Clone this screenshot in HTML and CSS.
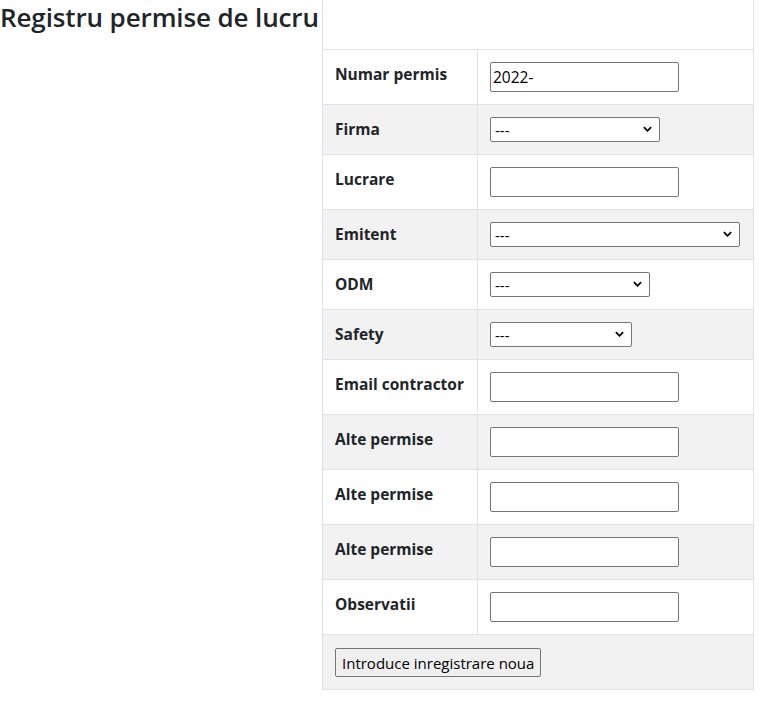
FILE: index.html
```html
<!DOCTYPE html>
<html lang="ro">
<head>
<meta charset="utf-8">
<title>Registru permise de lucru</title>
<link rel="stylesheet" href="styles.css">
</head>
<body>
<div class="page">
  <h2 class="title">Registru permise de lucru</h2>
  <form class="form">
    <table class="grid">
      <colgroup><col class="col-label"><col class="col-value"></colgroup>
      <thead>
        <tr><th>&nbsp;</th><th>&nbsp;</th></tr>
      </thead>
      <tbody>
        <tr><td class="label">Numar permis</td><td><input class="field" type="text" value="2022-"></td></tr>
        <tr><td class="label">Firma</td><td><span class="sel sel-firma"><select><option>---</option></select><svg class="chev" viewBox="0 0 10 6"><path d="M1 1l4 4 4-4" /></svg></span></td></tr>
        <tr><td class="label">Lucrare</td><td><input class="field" type="text"></td></tr>
        <tr><td class="label">Emitent</td><td><span class="sel sel-emitent"><select><option>---</option></select><svg class="chev" viewBox="0 0 10 6"><path d="M1 1l4 4 4-4" /></svg></span></td></tr>
        <tr><td class="label">ODM</td><td><span class="sel sel-odm"><select><option>---</option></select><svg class="chev" viewBox="0 0 10 6"><path d="M1 1l4 4 4-4" /></svg></span></td></tr>
        <tr><td class="label">Safety</td><td><span class="sel sel-safety"><select><option>---</option></select><svg class="chev" viewBox="0 0 10 6"><path d="M1 1l4 4 4-4" /></svg></span></td></tr>
        <tr><td class="label">Email contractor</td><td><input class="field" type="text"></td></tr>
        <tr><td class="label">Alte permise</td><td><input class="field" type="text"></td></tr>
        <tr><td class="label">Alte permise</td><td><input class="field" type="text"></td></tr>
        <tr><td class="label">Alte permise</td><td><input class="field" type="text"></td></tr>
        <tr><td class="label">Observatii</td><td><input class="field" type="text"></td></tr>
        <tr><td colspan="2"><button class="btn" type="button">Introduce inregistrare noua</button></td></tr>
      </tbody>
    </table>
  </form>
</div>
</body>
</html>
```
FILE: styles.css
```css
html, body {
  margin: 0;
  padding: 0;
  background: #ffffff;
}
body {
  font-family: "Open Sans", "Noto Sans", sans-serif;
  color: #212529;
  font-size: 16px;
}
.page {
  display: flex;
  align-items: flex-start;
}
.title {
  flex: none;
  width: 322px;
  margin: 0;
  padding-top: 2px;
  font-size: 26px;
  font-weight: 600;
  line-height: 1.2;
  white-space: nowrap;
  letter-spacing: -0.12px;
}
.form {
  margin: 0;
}
.grid {
  border-collapse: collapse;
  table-layout: fixed;
  width: 431px;
  border-left: 1px solid #dee2e6;
  border-right: 1px solid #dee2e6;
  border-bottom: 1px solid #dee2e6;
}
.col-label { width: 155px; }
.col-value { width: 276px; }
.grid th,
.grid td {
  padding: 12px;
  line-height: 24px;
  vertical-align: top;
  text-align: left;
  border-left: 1px solid #dee2e6;
  border-top: 1px solid #dee2e6;
}
.grid thead th {
  padding-top: 13px;
  border-top: none;
  border-left: none;
}
.grid tbody tr:nth-child(even) {
  background: #f2f2f2;
}
.label {
  font-weight: 700;
  font-size: 15.5px;
  white-space: nowrap;
}
.field {
  display: block;
  box-sizing: border-box;
  width: 189px;
  height: 30px;
  margin: 0;
  padding: 1px 2px;
  border: 1px solid #767676;
  border-radius: 2px;
  background: #ffffff;
  font-family: inherit;
  font-size: 15.5px;
  color: #000000;
}
.sel {
  position: relative;
  display: block;
}
.sel select {
  display: block;
  box-sizing: border-box;
  height: 25px;
  margin: 0;
  padding: 0 20px 0 4px;
  border: 1px solid #767676;
  border-radius: 2px;
  background: #ffffff;
  font-family: inherit;
  font-size: 15px;
  color: #000000;
  -webkit-appearance: none;
  appearance: none;
}
.sel-firma select { width: 170px; }
.sel-emitent select { width: 250px; }
.sel-odm select { width: 160px; }
.sel-safety select { width: 142px; }
.chev {
  position: absolute;
  top: 9px;
  width: 9px;
  height: 6px;
  fill: none;
  stroke: #000000;
  stroke-width: 2;
}
.sel-firma .chev { left: 153px; }
.sel-emitent .chev { left: 233px; }
.sel-odm .chev { left: 143px; }
.sel-safety .chev { left: 125px; }
.btn {
  display: block;
  box-sizing: border-box;
  height: 29px;
  margin: 1px 0 0 0;
  padding: 0 6px;
  border: 1px solid #767676;
  border-radius: 2px;
  background: #efefef;
  font-family: inherit;
  font-size: 15px;
  color: #000000;
}
```
